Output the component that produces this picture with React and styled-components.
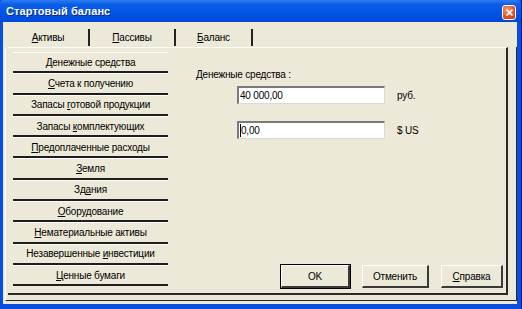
import React from "react";
import styled, { createGlobalStyle } from "styled-components";

const GlobalStyle = createGlobalStyle`
  html, body {
    margin: 0;
    padding: 0;
    background: #ffffff;
  }
  body {
    font-family: "Liberation Sans", Arial, sans-serif;
    font-size: 10px;
    letter-spacing: -0.2px;
  }
`;

const assets = [
  { label: "Денежные средства", key: "Д" },
  { label: "Счета к получению", key: "С" },
  { label: "Запасы готовой продукции", pre: "Запасы ", key: "г", post: "отовой продукции" },
  { label: "Запасы комплектующих", pre: "Запасы ", key: "к", post: "омплектующих" },
  { label: "Предоплаченные расходы", key: "П" },
  { label: "Земля", key: "З" },
  { label: "Здания", pre: "Зд", key: "а", post: "ния" },
  { label: "Оборудование", key: "О" },
  { label: "Нематериальные активы", key: "Н" },
  { label: "Незавершенные инвестиции", pre: "Незавершенные ", key: "и", post: "нвестиции" },
  { label: "Ценные бумаги", key: "Ц" },
];

// label with the underlined access key, kept in one span so flex keeps the spaces
function Mnemonic({ item }) {
  if (item.pre !== undefined) {
    return (
      <span>
        {item.pre}
        <u>{item.key}</u>
        {item.post}
      </span>
    );
  }
  return (
    <span>
      <u>{item.key}</u>
      {item.label.slice(1)}
    </span>
  );
}

export default function App() {
  return (
    <>
      <GlobalStyle />
      <Window>
        <TitleBar>
          <Title>Стартовый баланс</Title>
          <CloseButton>
            <svg width="9" height="9" viewBox="0 0 9 9">
              <path d="M1.5 1.5 L7.5 7.5 M7.5 1.5 L1.5 7.5" stroke="#fff" strokeWidth="1.7" />
            </svg>
          </CloseButton>
        </TitleBar>

        <Body>
          <Tabs>
            <Tab $width={82}>
              <span><u>А</u>ктивы</span>
            </Tab>
            <Tab $width={86}>
              <span><u>П</u>ассивы</span>
            </Tab>
            <Tab $width={77}>
              <span><u>Б</u>аланс</span>
            </Tab>
          </Tabs>

          <Page>
            <Panel>
              <AssetList>
                {assets.map((item) => (
                  <AssetButton key={item.label}>
                    <Mnemonic item={item} />
                  </AssetButton>
                ))}
              </AssetList>

              <Content>
                <FieldLabel>Денежные средства :</FieldLabel>
                <FieldRow $gap={4}>
                  <Input>40 000,00</Input>
                  <Unit>руб.</Unit>
                </FieldRow>
                <FieldRow $gap={17}>
                  <Input>
                    <Caret />
                    0,00
                  </Input>
                  <Unit>$ US</Unit>
                </FieldRow>

                <Buttons>
                  <DialogButton $default $width={69}>OK</DialogButton>
                  <DialogButton $width={67}>Отменить</DialogButton>
                  <DialogButton $width={62}>
                    <span><u>С</u>правка</span>
                  </DialogButton>
                </Buttons>
              </Content>
            </Panel>
          </Page>
        </Body>
      </Window>
    </>
  );
}

const Window = styled.div`
  width: 522px;
  height: 309px;
  box-sizing: border-box;
  display: flex;
  flex-direction: column;
  background: #0a4ee0;
  padding: 0 4px 5px 3px;
  border-right: 1px solid #00138c;
`;

const TitleBar = styled.div`
  height: 22px;
  flex-shrink: 0;
  margin: 0 -4px 0 -3px;
  padding: 0 5px 0 6px;
  display: flex;
  align-items: center;
  justify-content: space-between;
  background: linear-gradient(
    to bottom,
    #2f7cf2 0%,
    #0a5ee8 20%,
    #0055e5 60%,
    #0048d8 100%
  );
  border-top-left-radius: 4px;
  border-top-right-radius: 4px;
`;

const Title = styled.div`
  color: #ffffff;
  font-weight: bold;
  font-size: 11px;
  letter-spacing: 0.1px;
  text-shadow: 1px 1px 0 #0a2a8a;
`;

const CloseButton = styled.div`
  width: 12px;
  height: 13px;
  margin-top: 2px;
  border-radius: 3px;
  border: 1px solid #ffffff;
  background: radial-gradient(circle at 35% 30%, #f29a73 0%, #e0552b 55%, #c0381a 100%);
  display: flex;
  align-items: center;
  justify-content: center;
`;

const Body = styled.div`
  flex: 1;
  background: #ece9d8;
  display: flex;
  flex-direction: column;
  padding: 4px 0 3px 2px;
  min-height: 0;
`;

const Tabs = styled.div`
  display: flex;
  height: 21px;
  flex-shrink: 0;
  padding-left: 3px;
`;

const Tab = styled.div`
  width: ${(p) => p.$width}px;
  box-sizing: border-box;
  display: flex;
  align-items: center;
  justify-content: center;
  color: #000;
  border-right: 2px solid #222;
  margin: 3px 0 1px;
`;

const Page = styled.div`
  flex: 1;
  display: flex;
  min-height: 0;
  border-left: 1px solid #ffffff;
  border-right: 1px solid #2a2a2a;
  border-bottom: 1px solid #2a2a2a;
  padding: 0 8px 5px 2px;
`;

const Panel = styled.div`
  flex: 1;
  display: flex;
  border-top: 1px solid #fcfcf8;
  border-right: 2px solid #2a2a2a;
  border-bottom: 2px solid #2a2a2a;
  padding: 4px 3px 4px 5px;
  min-height: 0;
`;

const AssetList = styled.div`
  width: 155px;
  display: flex;
  flex-direction: column;
`;

const AssetButton = styled.div`
  height: 21.3px;
  box-sizing: border-box;
  flex-shrink: 0;
  display: flex;
  align-items: center;
  justify-content: center;
  color: #000;
  white-space: nowrap;
  border-top: 1px solid #ffffff;
  border-bottom: 2px solid #1e1e1e;
  background: #ece9d8;
`;

const Content = styled.div`
  flex: 1;
  display: flex;
  flex-direction: column;
  padding: 16px 0 0 28px;
`;

const FieldLabel = styled.div`
  color: #000;
  height: 14px;
  line-height: 14px;
`;

const FieldRow = styled.div`
  display: flex;
  align-items: center;
  gap: 12px;
  margin-top: ${(p) => p.$gap}px;
  padding-left: 41px;
`;

const Input = styled.div`
  width: 148px;
  height: 18px;
  box-sizing: border-box;
  background: #ffffff;
  border-top: 2px solid #7a7a7a;
  border-left: 2px solid #7a7a7a;
  border-right: 1px solid #dcdacd;
  border-bottom: 1px solid #dcdacd;
  display: flex;
  align-items: center;
  padding-left: 1px;
  color: #000;
`;

const Caret = styled.span`
  display: inline-block;
  width: 1px;
  height: 13px;
  background: #000;
`;

const Unit = styled.div`
  color: #000;
`;

const Buttons = styled.div`
  margin-top: auto;
  display: flex;
  justify-content: flex-end;
  gap: 12px;
  padding-bottom: 1px;
`;

const DialogButton = styled.div`
  width: ${(p) => p.$width}px;
  height: 23px;
  box-sizing: border-box;
  display: flex;
  align-items: center;
  justify-content: center;
  color: #000;
  background: #ece9d8;
  border-top: 1px solid #ffffff;
  border-left: 1px solid #ffffff;
  border-right: 2px solid #3a3a3a;
  border-bottom: 2px solid #3a3a3a;
  ${(p) => p.$default && `outline: 1px solid #000;`}
`;
